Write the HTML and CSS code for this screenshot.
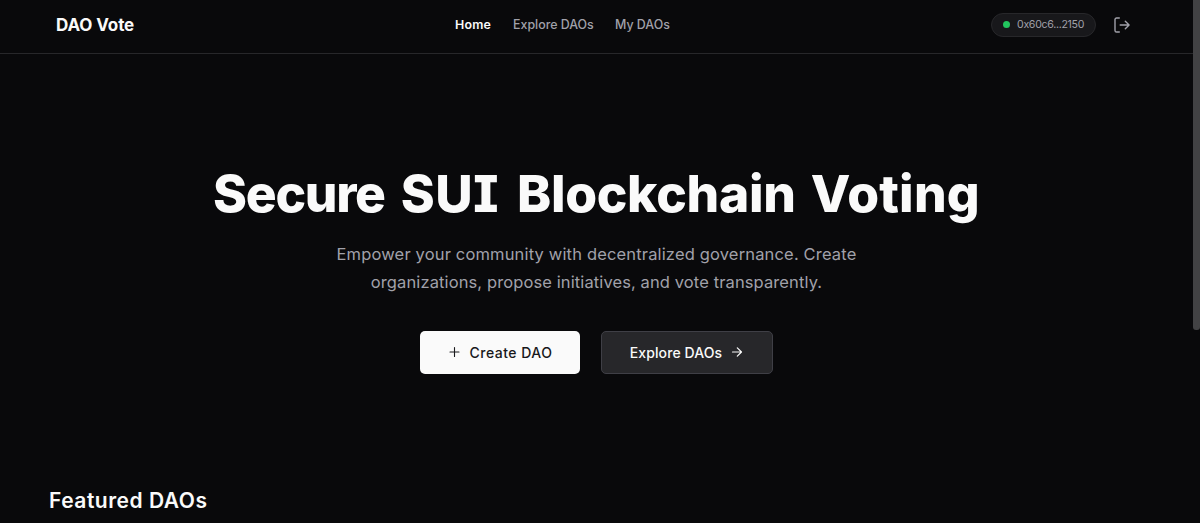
FILE: index.html
```html
<!DOCTYPE html>
<html lang="en">
<head>
<meta charset="utf-8">
<title>DAO Vote</title>
<link rel="stylesheet" href="styles.css">
</head>
<body>
<div class="page">
  <header class="header">
    <a class="brand"><span>DAO Vote</span></a>
    <nav class="nav">
      <a class="nav-link home active">Home</a>
      <a class="nav-link explore">Explore DAOs</a>
      <a class="nav-link mine">My DAOs</a>
    </nav>
    <div class="account">
      <div class="wallet"><span class="dot"></span><span class="address">0x60c6...2150</span></div>
      <svg class="logout" viewBox="0 0 18 18" fill="none" stroke="currentColor" stroke-width="1.4" stroke-linecap="round" stroke-linejoin="round"><path d="M6.3 2H3.6A1.6 1.6 0 0 0 2 3.600V14.400A1.600 1.600 0 0 0 3.600 16H6.300M7.200 9H16M12.300 5.200L16.100 9L12.300 12.800"/></svg>
    </div>
  </header>
  <main>
    <section class="hero">
      <h1 class="title"><span class="secure">Secure</span> <span class="sui">SU<span class="serif-i">I</span></span> <span class="blockchain">Blockchain</span> <span class="voting">Voting</span></h1>
      <p class="lead"><span class="line-one">Empower your community with decentralized governance. Create</span><br><span class="line-two">organizations, propose initiatives, and vote transparently.</span></p>
      <div class="actions">
        <a class="button primary"><svg class="icon" viewBox="0 0 14 14" fill="none" stroke="currentColor" stroke-width="1.1" stroke-linecap="round"><path d="M7.500 2.500V11.500M3 7H12"/></svg><span>Create DAO</span></a>
        <a class="button secondary"><span>Explore DAOs</span><svg class="icon" viewBox="0 0 14 14" fill="none" stroke="currentColor" stroke-width="1.200" stroke-linecap="round" stroke-linejoin="round"><path d="M2.500 7H11.500M7.300 2.800L11.500 7L7.300 11.200"/></svg></a>
      </div>
    </section>
    <h2 class="featured"><span>Featured DAOs</span></h2>
  </main>
</div>
<div class="scrollbar"><div class="thumb"></div></div>
</body>
</html>
```
FILE: styles.css
```css
* { box-sizing: border-box; }
body {
  margin: 0;
  height: 523px;
  overflow: hidden;
  display: flex;
  background: #09090b;
  color: #fafafa;
  font-family: Inter, "Liberation Sans", sans-serif;
}
.page { width: 1193px; height: 523px; overflow: hidden; }
.scrollbar { width: 7px; background: #09090b; }
.thumb { height: 330px; background: #424244; border-radius: 0 0 3px 3px; }
.header {
  height: 54px;
  padding: 0 62px 4px 56px;
  border-bottom: 1px solid #27272a;
  display: grid;
  grid-template-columns: 399px 1fr auto;
  align-items: center;
  white-space: nowrap;
}
.brand { font-size: 17px; font-weight: 700; letter-spacing: -0.1px; }
.nav { display: flex; gap: 21px; font-size: 12.4px; font-weight: 500; color: #a1a1aa; }
.home { width: 37px; letter-spacing: 0.2px; }
.explore { width: 81px; }
.active { color: #fafafa; font-weight: 600; }
.account { display: flex; align-items: center; gap: 17px; color: #a1a1aa; }
.wallet {
  width: 105px;
  height: 24px;
  padding-left: 11px;
  display: flex;
  align-items: center;
  gap: 7px;
  border: 1px solid #27272a;
  border-radius: 12px;
  background: #18181b;
  font-size: 10.6px;
  letter-spacing: -0.3px;
}
.dot { width: 7px; height: 7px; border-radius: 50%; background: #22c55e; }
.logout { width: 18px; height: 18px; }
.hero { height: 429px; padding-top: 107px; text-align: center; white-space: nowrap; }
.title { display: flex; justify-content: center; gap: 14px; margin: 0; font-size: 51.5px; line-height: 64px; font-weight: 800; }
.secure { letter-spacing: -1.3px; margin-right: 2px; }
.sui { letter-spacing: 0.5px; margin-right: 4px; }
.blockchain { letter-spacing: -0.3px; margin-right: 1px; }
.voting { letter-spacing: 0.2px; }
.serif-i { font-feature-settings: "cv08" 1; }
.lead { margin: 15px 0 0; font-size: 16.5px; line-height: 28px; color: #a1a1aa; }
.line-one { letter-spacing: 0.16px; }
.line-two { letter-spacing: 0.11px; }
.actions { display: flex; justify-content: center; gap: 21px; margin-top: 35px; }
.button {
  height: 43px;
  padding-bottom: 1px;
  border-radius: 5px;
  display: flex;
  align-items: center;
  justify-content: center;
  gap: 8px;
  font-size: 14px;
  font-weight: 500;
}
.icon { width: 14px; height: 14px; }
.primary { width: 160px; background: #fafafa; color: #18181b; letter-spacing: 0.5px; }
.secondary { width: 172px; background: #27272a; border: 1px solid #3f3f46; letter-spacing: 0.1px; }
.featured { margin: 0; padding: 5px 0 0 49px; font-size: 21px; line-height: 26px; font-weight: 600; letter-spacing: 0.52px; }
```
